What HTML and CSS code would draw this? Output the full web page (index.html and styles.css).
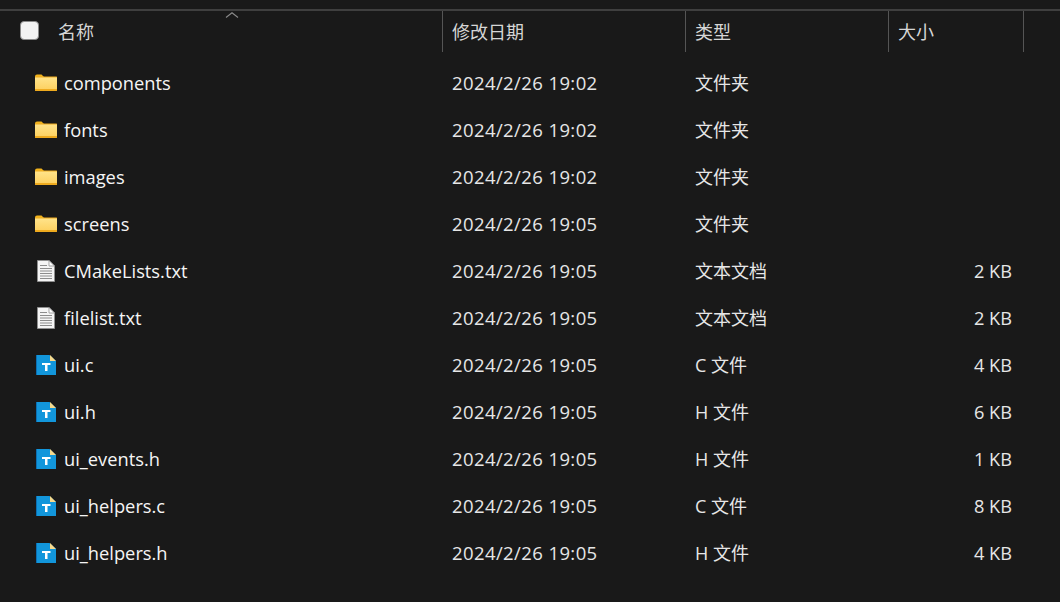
FILE: index.html
```html
<!DOCTYPE html>
<html lang="zh-CN">
<head>
  <meta charset="UTF-8">
  <title>ui</title>
  <link rel="stylesheet" href="styles.css">
</head>
<body>
  <svg width="0" height="0" class="defs">
    <defs>
      <linearGradient id="folderFill" x1="0" y1="0" x2="0" y2="1">
        <stop offset="0" stop-color="#ffe38a"/>
        <stop offset="1" stop-color="#fdd263"/>
      </linearGradient>
      <symbol id="folder" viewBox="0 0 22 17">
        <path d="M0 2.500Q0 0.500 2 0.500H6.500L9 3H0Z" fill="#f3b41c"/>
        <rect y="2.500" width="22" height="14.500" rx="0.500" fill="#eeaa1e"/>
        <rect y="3.500" width="22" height="11.500" fill="url(#folderFill)"/>
      </symbol>
      <symbol id="doc" viewBox="0 0 18 22">
        <path d="M0.500 0.500H12L17.500 6V21.500H0.500Z" fill="#f4f4f4" stroke="#8f8f8f"/>
        <path d="M12 0.500V6H17.500Z" fill="#fff" stroke="#8f8f8f" stroke-width="0.800"/>
        <path d="M3 5.500H10M3 8.500H15M3 11H15M3 13.500H15M3 16H15M3 18.500H15" stroke="#8c8c8c" stroke-width="1"/>
      </symbol>
      <symbol id="source" viewBox="0 0 20 20">
        <path d="M0 0H13.500L20 6V20H0Z" fill="#1296db"/>
        <path d="M0 0H1V20H0Z" fill="#0b6fb3"/>
        <path d="M14 0L20 6H14Z" fill="#f6d98c"/>
        <path d="M6 8H14.500V10H11.500V16H9V10H6Z" fill="#fff"/>
      </symbol>
    </defs>
  </svg>

  <div class="explorer">
    <div class="head">
      <div class="cell name-head">
        <span class="check"></span>
        <span>名称</span>
        <svg class="sort" width="14" height="6" viewBox="0 0 14 6"><path d="M1 5.500L7 0.800L13 5.500" fill="none" stroke="#8a8a8a" stroke-width="1.100"/></svg>
      </div>
      <div class="cell">修改日期</div>
      <div class="cell">类型</div>
      <div class="cell">大小</div>
    </div>

    <div class="list">
      <div class="row"><div class="name"><svg class="icon-folder"><use href="#folder"/></svg>components</div><div class="date">2024/2/26 19:02</div><div class="type">文件夹</div><div class="size"></div></div>
      <div class="row"><div class="name"><svg class="icon-folder"><use href="#folder"/></svg>fonts</div><div class="date">2024/2/26 19:02</div><div class="type">文件夹</div><div class="size"></div></div>
      <div class="row"><div class="name"><svg class="icon-folder"><use href="#folder"/></svg>images</div><div class="date">2024/2/26 19:02</div><div class="type">文件夹</div><div class="size"></div></div>
      <div class="row"><div class="name"><svg class="icon-folder"><use href="#folder"/></svg>screens</div><div class="date">2024/2/26 19:05</div><div class="type">文件夹</div><div class="size"></div></div>
      <div class="row"><div class="name"><svg class="icon-doc"><use href="#doc"/></svg>CMakeLists.txt</div><div class="date">2024/2/26 19:05</div><div class="type">文本文档</div><div class="size">2 KB</div></div>
      <div class="row"><div class="name"><svg class="icon-doc"><use href="#doc"/></svg>filelist.txt</div><div class="date">2024/2/26 19:05</div><div class="type">文本文档</div><div class="size">2 KB</div></div>
      <div class="row"><div class="name"><svg class="icon-source"><use href="#source"/></svg>ui.c</div><div class="date">2024/2/26 19:05</div><div class="type">C 文件</div><div class="size">4 KB</div></div>
      <div class="row"><div class="name"><svg class="icon-source"><use href="#source"/></svg>ui.h</div><div class="date">2024/2/26 19:05</div><div class="type">H 文件</div><div class="size">6 KB</div></div>
      <div class="row"><div class="name"><svg class="icon-source"><use href="#source"/></svg>ui_events.h</div><div class="date">2024/2/26 19:05</div><div class="type">H 文件</div><div class="size">1 KB</div></div>
      <div class="row"><div class="name"><svg class="icon-source"><use href="#source"/></svg>ui_helpers.c</div><div class="date">2024/2/26 19:05</div><div class="type">C 文件</div><div class="size">8 KB</div></div>
      <div class="row"><div class="name"><svg class="icon-source"><use href="#source"/></svg>ui_helpers.h</div><div class="date">2024/2/26 19:05</div><div class="type">H 文件</div><div class="size">4 KB</div></div>
    </div>
  </div>
</body>
</html>
```

FILE: styles.css
```css
html, body {
  margin: 0;
  padding: 0;
  height: 100%;
  overflow: hidden;
  background: #191919;
}
.defs {
  display: block;
  height: 0;
}
.explorer {
  padding-top: 9px;
  font-family: "Open Sans", "Noto Sans CJK SC", sans-serif;
  font-size: 18.500px;
  color: #e6e6e6;
}
.head {
  display: grid;
  grid-template-columns: 443px 243px 203px 135px;
  height: 41px;
  border-top: 2px solid #3f3f3f;
  color: #d6d6d6;
  font-size: 18px;
}
.cell {
  position: relative;
  display: flex;
  align-items: center;
  padding-left: 9px;
  padding-bottom: 2px;
  border-right: 1px solid #555;
}
.name-head {
  padding-left: 20px;
  gap: 19px;
}
.check {
  width: 17px;
  height: 17px;
  border-radius: 4px;
  background: #f2f2f2;
  border: 1px solid #8a8a8a;
}
.sort {
  position: absolute;
  left: 225px;
  top: 1px;
}
.list {
  padding-top: 7px;
}
.row {
  display: grid;
  grid-template-columns: 443px 243px 203px 135px;
  height: 47px;
  align-items: center;
}
.row > div {
  padding-left: 9px;
}
.row > .name {
  display: flex;
  align-items: center;
  padding-left: 0;
  color: #f5f5f5;
  font-size: 18.300px;
}
.row > .date {
  letter-spacing: 0.400px;
}
.row > .type {
  font-size: 18px;
  padding-bottom: 2px;
}
.row > .size {
  padding: 0 12px 0 0;
  text-align: right;
  font-size: 18.200px;
}
.icon-folder {
  width: 22px;
  height: 17px;
  margin: 0 7px 0 35px;
}
.icon-doc {
  width: 18px;
  height: 22px;
  margin: 0 9px 0 37px;
}
.icon-source {
  width: 20px;
  height: 20px;
  margin: 0 8px 0 36px;
}
```
